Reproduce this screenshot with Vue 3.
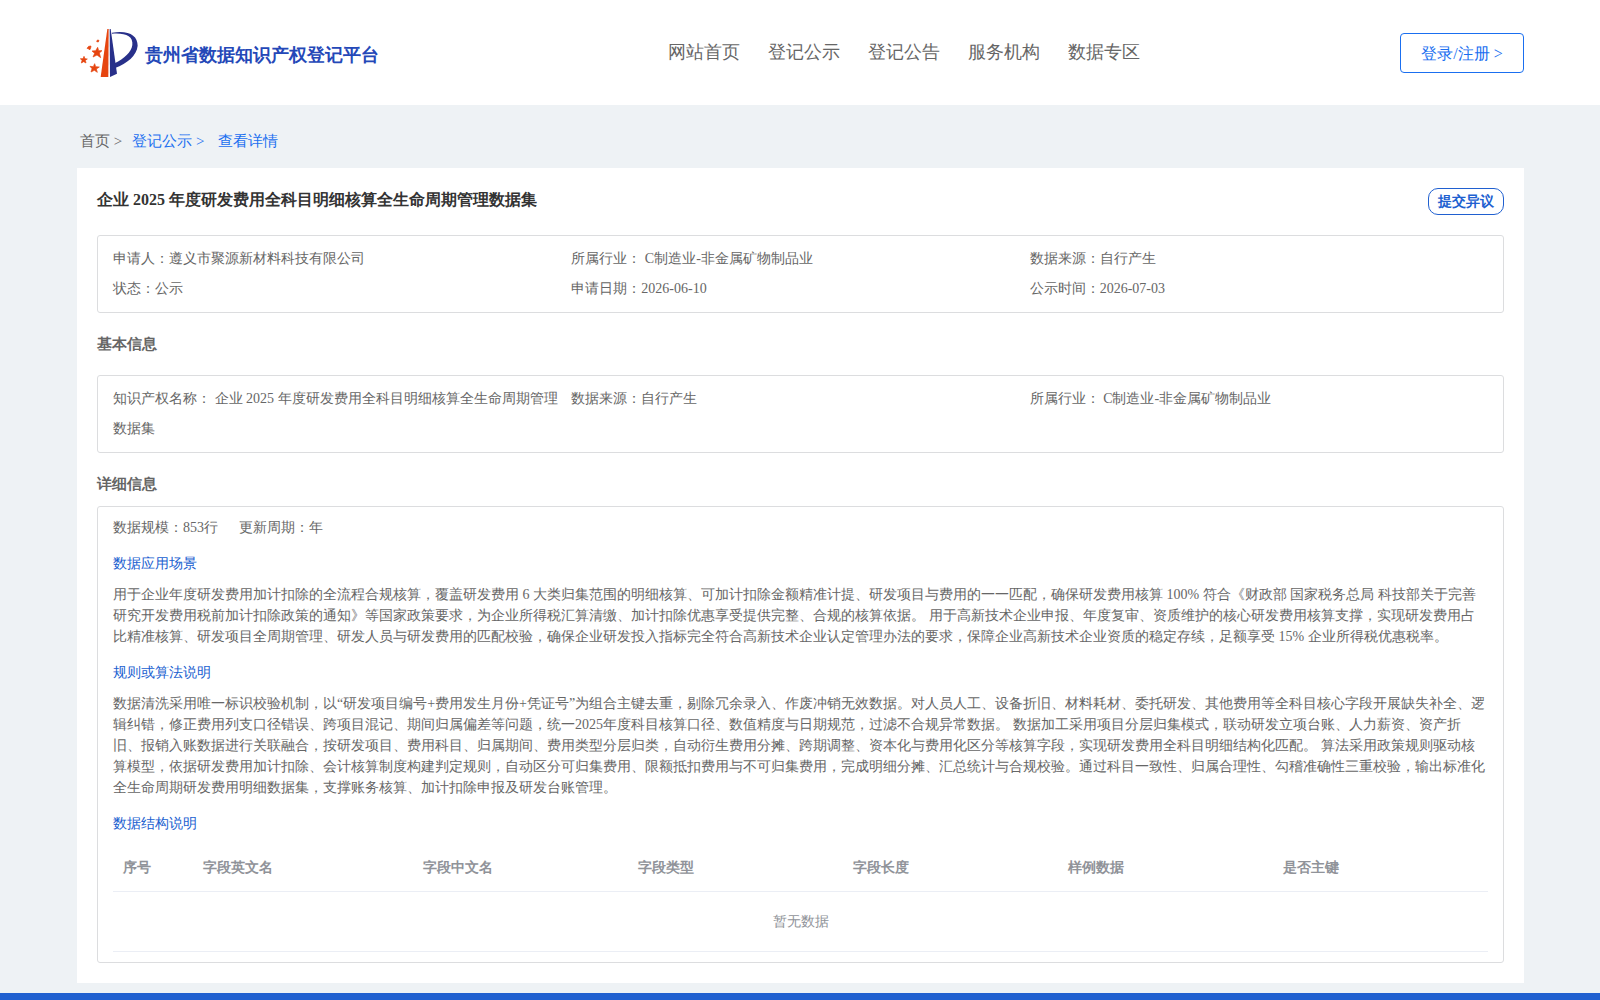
<script setup>
const navItems = ['网站首页', '登记公示', '登记公告', '服务机构', '数据专区']

const summary = [
  '申请人：遵义市聚源新材料科技有限公司',
  '所属行业： C制造业-非金属矿物制品业',
  '数据来源：自行产生',
  '状态：公示',
  '申请日期：2026-06-10',
  '公示时间：2026-07-03',
]

const basicInfo = [
  '知识产权名称： 企业 2025 年度研发费用全科目明细核算全生命周期管理数据集',
  '数据来源：自行产生',
  '所属行业： C制造业-非金属矿物制品业',
]

const sections = [
  {
    title: '数据应用场景',
    text: '用于企业年度研发费用加计扣除的全流程合规核算，覆盖研发费用 6 大类归集范围的明细核算、可加计扣除金额精准计提、研发项目与费用的一一匹配，确保研发费用核算 100% 符合《财政部 国家税务总局 科技部关于完善研究开发费用税前加计扣除政策的通知》等国家政策要求，为企业所得税汇算清缴、加计扣除优惠享受提供完整、合规的核算依据。 用于高新技术企业申报、年度复审、资质维护的核心研发费用核算支撑，实现研发费用占比精准核算、研发项目全周期管理、研发人员与研发费用的匹配校验，确保企业研发投入指标完全符合高新技术企业认定管理办法的要求，保障企业高新技术企业资质的稳定存续，足额享受 15% 企业所得税优惠税率。',
  },
  {
    title: '规则或算法说明',
    text: '数据清洗采用唯一标识校验机制，以“研发项目编号+费用发生月份+凭证号”为组合主键去重，剔除冗余录入、作废冲销无效数据。对人员人工、设备折旧、材料耗材、委托研发、其他费用等全科目核心字段开展缺失补全、逻辑纠错，修正费用列支口径错误、跨项目混记、期间归属偏差等问题，统一2025年度科目核算口径、数值精度与日期规范，过滤不合规异常数据。 数据加工采用项目分层归集模式，联动研发立项台账、人力薪资、资产折旧、报销入账数据进行关联融合，按研发项目、费用科目、归属期间、费用类型分层归类，自动衍生费用分摊、跨期调整、资本化与费用化区分等核算字段，实现研发费用全科目明细结构化匹配。 算法采用政策规则驱动核算模型，依据研发费用加计扣除、会计核算制度构建判定规则，自动区分可归集费用、限额抵扣费用与不可归集费用，完成明细分摊、汇总统计与合规校验。通过科目一致性、归属合理性、勾稽准确性三重校验，输出标准化全生命周期研发费用明细数据集，支撑账务核算、加计扣除申报及研发台账管理。',
  },
]

const columns = ['序号', '字段英文名', '字段中文名', '字段类型', '字段长度', '样例数据', '是否主键']
</script>

<template>
  <div class="page">
    <header class="header">
      <a class="brand" href="#">
        <svg class="logo" viewBox="60 54 174 150" aria-hidden="true">
          <path d="M142 57L146 57L145 201L122 201Z" fill="#e64510" />
          <g fill="#e64510" stroke="#e64510" stroke-width="2">
            <path d="M113 112L116 122L126 122L118 129L122 143L111 135L99 141L104 130L96 123L107 122Z" />
            <path d="M104 161L107 170L118 171L109 177L112 187L103 181L93 186L96 176L90 169L100 170Z" />
            <path d="M72 139L75 146L82 147L76 151L78 159L71 155L64 159L66 151L61 146L69 146Z" />
            <path d="M86 109L93 108L92 114L89 120L85 116L81 115Z" />
            <path d="M112 90L117 91L115 96L110 95Z" />
          </g>
          <g fill="#28308a">
            <path d="M149 57L152 57L171 191L150 201Z" />
            <path d="M156 68C206 60 233 76 233 107C230 137 202 160 165 174L164 160C193 145 214 127 217 105C220 78 196 68 156 71Z" />
          </g>
        </svg>
        <span>贵州省数据知识产权登记平台</span>
      </a>
      <nav class="nav">
        <a v-for="item in navItems" :key="item" href="#">{{ item }}</a>
      </nav>
      <button class="login" type="button">登录/注册 &gt;</button>
    </header>

    <main class="main">
      <nav class="crumbs">
        <a class="home" href="#">首页 &gt;</a>
        <a href="#">登记公示 &gt;</a>
        <a href="#">查看详情</a>
      </nav>

      <article class="panel">
        <div class="title-row">
          <h1>企业 2025 年度研发费用全科目明细核算全生命周期管理数据集</h1>
          <button class="objection" type="button">提交异议</button>
        </div>

        <div class="box fields">
          <div v-for="item in summary" :key="item">{{ item }}</div>
        </div>

        <h2>基本信息</h2>
        <div class="box fields">
          <div v-for="item in basicInfo" :key="item">{{ item }}</div>
        </div>

        <h2 class="compact">详细信息</h2>
        <div class="box detail">
          <div class="scale">
            <span>数据规模：853行</span>
            <span>更新周期：年</span>
          </div>
          <section v-for="s in sections" :key="s.title">
            <h3>{{ s.title }}</h3>
            <p>{{ s.text }}</p>
          </section>
          <h3>数据结构说明</h3>
          <table>
            <colgroup>
              <col class="col-index" />
              <col class="col-name" />
              <col v-for="n in 5" :key="n" />
            </colgroup>
            <thead>
              <tr>
                <th v-for="c in columns" :key="c" scope="col">{{ c }}</th>
              </tr>
            </thead>
            <tbody>
              <tr>
                <td :colspan="columns.length">暂无数据</td>
              </tr>
            </tbody>
          </table>
        </div>
      </article>
    </main>
    <footer class="footer"></footer>
  </div>
</template>

<style>
body {
  margin: 0;
}
</style>

<style scoped>
.page {
  display: flex;
  flex-direction: column;
  min-height: 100vh;
  background: #eef2f5;
  color: #666;
  font-family: "Liberation Serif", serif;
  font-size: 14px;
}

a {
  color: inherit;
  text-decoration: none;
}

button {
  box-sizing: border-box;
  padding: 0;
  background: #fff;
  font-family: inherit;
  cursor: pointer;
}

.header {
  display: flex;
  align-items: center;
  justify-content: space-between;
  box-sizing: border-box;
  height: 105px;
  padding: 0 76px 0 80px;
  background: #fff;
}

.brand {
  display: flex;
  flex: 1;
  align-items: center;
  gap: 7px;
  color: #2448b8;
  font-size: 18px;
  font-weight: bold;
}

.brand span {
  padding-top: 4px;
}

.logo {
  width: 58px;
  height: 50px;
}

.nav {
  display: flex;
  gap: 28px;
  padding-bottom: 2px;
  font-size: 18px;
}

.login {
  width: 124px;
  height: 40px;
  margin-left: 260px;
  padding-top: 3px;
  border: 1px solid #1a6ff0;
  border-radius: 4px;
  color: #1a6ff0;
  font-size: 16px;
}

.main {
  padding: 0 76px 10px 77px;
}

.crumbs {
  display: flex;
  align-items: center;
  gap: 10px;
  height: 63px;
  padding: 10px 3px 0;
  box-sizing: border-box;
  color: #1a6ff0;
  font-size: 15px;
}

.crumbs a:last-child {
  margin-left: 4px;
}

.crumbs .home {
  color: #666;
}

.panel {
  padding: 20px;
  background: #fff;
}

.title-row {
  display: flex;
  justify-content: space-between;
  height: 47px;
}

h1,
h2,
h3,
p {
  margin: 0;
}

h1 {
  color: #333;
  font-size: 16px;
  line-height: 24px;
}

.objection {
  width: 76px;
  height: 27px;
  border: 1px solid #2060d0;
  border-radius: 10px;
  color: #2060d0;
  font-size: 14px;
  font-weight: bold;
}

.box {
  border: 1px solid #dcdddf;
  border-radius: 3px;
}

.fields {
  display: grid;
  grid-template-columns: repeat(3, 1fr);
  padding: 8px 15px;
  line-height: 30px;
}

.fields div {
  padding-right: 10px;
}

h2 {
  padding: 21px 0;
  font-size: 15px;
  line-height: 20px;
}

h2.compact {
  padding-bottom: 12px;
}

.detail {
  padding: 10px 15px;
  line-height: 21px;
}

.scale {
  display: flex;
  gap: 21px;
}

h3 {
  padding: 15px 0 10px;
  color: #2060d0;
  font-size: 14px;
  font-weight: normal;
}

table {
  width: 100%;
  table-layout: fixed;
  border-collapse: collapse;
  color: #909399;
}

th,
td {
  padding: 12px 10px;
  border-bottom: 1px solid #ebeef5;
  line-height: 23px;
}

th {
  text-align: left;
}

td {
  height: 35px;
  text-align: center;
}

.col-index {
  width: 80px;
}

.col-name {
  width: 220px;
}

.footer {
  flex: 1;
  min-height: 7px;
  background: #2060d0;
}
</style>
